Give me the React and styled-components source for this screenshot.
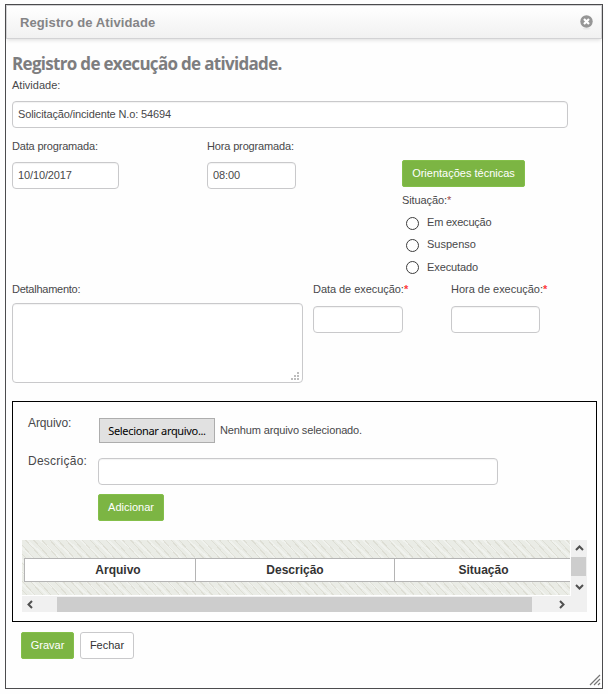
import React from 'react';
import styled, { createGlobalStyle } from 'styled-components';

const GlobalStyle = createGlobalStyle`
  * { box-sizing: border-box; }
  body { margin: 0; background: #fefefe; }
  body, input, button, textarea { font-family: "Liberation Sans", Arial, sans-serif; font-size: 11px; }
`;

const Page = styled.div`
  width: 608px;
  height: 694px;
  padding: 4px 5px;
  overflow: hidden;
`;

const Dialog = styled.section`
  position: relative;
  display: flex;
  flex-direction: column;
  width: 598px;
  height: 685px;
  background: #fefefe;
  border: 1px solid #4c4c4e;
`;

const Header = styled.header`
  display: flex;
  align-items: center;
  justify-content: space-between;
  flex: none;
  height: 34px;
  padding: 2px 8px 0 13px;
  background: linear-gradient(#ffffff, #f1f1f1);
  border: 1px solid #d2d2d4;
  box-shadow: 0 2px 4px -1px rgba(0, 0, 0, 0.14);
`;

const Title = styled.h1`
  margin: 0;
  font-size: 13px;
  line-height: 16px;
  font-weight: bold;
  color: #848486;
  letter-spacing: 0.1px;
`;

const CloseButton = styled.button`
  display: block;
  width: 13px;
  height: 15px;
  margin-top: -1px;
  padding: 0;
  border: 0;
  background: none;
`;

const Body = styled.main`
  display: flex;
  flex-direction: column;
  padding: 14px 5px 0 6px;
`;

const Heading = styled.h2`
  margin: 0;
  height: 22px;
  font: bold 17px/22px "Open Sans", "Noto Sans", sans-serif;
  letter-spacing: -0.69px;
  color: #7d7d7f;
  white-space: nowrap;
`;

const Label = styled.label`
  display: block;
  height: 14px;
  margin-top: ${(p) => p.$offset || 0}px;
  line-height: 14px;
  font-size: ${(p) => p.$size || 11}px;
  letter-spacing: ${(p) => p.$spacing ?? -0.1}px;
  color: #48484a;
  white-space: nowrap;
`;

const Required = styled.span`
  color: ${(p) => p.$color || '#ff3b3b'};
  font-weight: ${(p) => (p.$color ? 'normal' : 'bold')};
`;

const Input = styled.input`
  display: block;
  width: ${(p) => p.$width}px;
  height: 27px;
  padding: 0 5px 1px;
  color: #48484a;
  letter-spacing: -0.13px;
  background: #fff;
  border: 1px solid #c9c9cb;
  border-radius: 4px;
  box-shadow: inset 0 1px 1px rgba(0, 0, 0, 0.05);
  outline: none;
`;

const Field = styled.div`
  display: flex;
  flex-direction: column;
  gap: ${(p) => p.$gap ?? 9}px;
  width: ${(p) => (p.$width ? `${p.$width}px` : 'auto')};
  flex: none;
`;

const ScheduleRow = styled.div`
  display: flex;
  height: 143px;
  margin-top: 11px;
`;

const ExecutionRow = styled.div`
  display: flex;
  height: 101px;
`;

const StatusColumn = styled.div`
  display: flex;
  flex-direction: column;
  padding-top: 21px;
`;

const GreenButton = styled.button`
  width: ${(p) => p.$width}px;
  height: 27px;
  padding: 0 0 1px;
  color: #fff;
  background: #7cb543;
  border: 1px solid #84bf4a;
  border-radius: 2px;
  white-space: nowrap;
`;

const PlainButton = styled(GreenButton)`
  color: #333;
  background: #fff;
  border: 1px solid #c9c9cb;
  border-radius: 3px;
`;

const RadioList = styled.div`
  display: flex;
  flex-direction: column;
  padding: 5px 0 0 4px;
`;

const RadioItem = styled.label`
  display: flex;
  align-items: center;
  gap: 8px;
  height: 22px;
  line-height: 14px;
  color: #48484a;
`;

const RadioLabel = styled.span`
  margin-top: ${(p) => p.$offset}px;
  letter-spacing: ${(p) => p.$spacing}px;
`;

const Radio = styled.input.attrs({ type: 'radio' })`
  appearance: none;
  width: 13px;
  height: 13px;
  margin: 0;
  border: 1px solid #3c3c3c;
  border-radius: 50%;
  background: #fff;
`;

const TextAreaFrame = styled.div`
  position: relative;
  width: 291px;
  height: 80px;
`;

const TextArea = styled.textarea`
  display: block;
  width: 291px;
  height: 80px;
  background: #fff;
  border: 1px solid #c9c9cb;
  border-radius: 4px;
  box-shadow: inset 0 1px 1px rgba(0, 0, 0, 0.05);
  resize: none;
  outline: none;
`;

const CornerGrip = styled.svg`
  position: absolute;
  right: ${(p) => p.$right}px;
  bottom: ${(p) => p.$bottom}px;
`;

const FilePanel = styled.section`
  display: flex;
  flex-direction: column;
  flex: none;
  height: 221px;
  margin-top: 18px;
  padding-top: 16px;
  border: 1px solid #000;
`;

const PanelRow = styled.div`
  display: flex;
  flex: none;
  height: ${(p) => p.$height}px;
  padding-left: 15px;
`;

const PanelLabel = styled.div`
  width: 70px;
  flex: none;
`;

const FileButton = styled.button`
  width: 116px;
  height: 25px;
  margin: 0 5px 0 1px;
  padding: 0 0 1px;
  color: #000;
  font-family: "Noto Sans", "Open Sans", sans-serif;
  letter-spacing: -0.33px;
  white-space: nowrap;
  background: #e1e1e1;
  border: 1px solid #adadad;
`;

const FileName = styled.span`
  height: 25px;
  line-height: 24px;
  letter-spacing: -0.13px;
  color: #48484a;
  white-space: nowrap;
`;

const ScrollArea = styled.div`
  display: grid;
  grid-template-columns: 548px 16px;
  grid-template-rows: 55px 16px;
  gap: 1px;
  width: 565px;
  margin-left: 9px;
`;

const Textured = styled.div`
  padding: 18px 0 0 2px;
  background-color: #eaece6;
  background-image:
    repeating-linear-gradient(48deg, transparent 0 3px, rgba(206, 205, 192, 0.45) 3px 4px, transparent 4px 6px),
    repeating-linear-gradient(42deg, transparent 0 7px, rgba(255, 255, 255, 0.3) 7px 9px);
`;

const TableHead = styled.div`
  display: grid;
  grid-template-columns: 171px 199px 176px;
  height: 24px;
  border: solid #b4b4b4;
  border-width: 1px 0;
  background: #fff;
`;

const HeadCell = styled.div`
  padding-left: ${(p) => p.$shift || 0}px;
  border-left: 1px solid #b4b4b4;
  font: bold 12px/22px "Liberation Sans", Arial, sans-serif;
  text-align: center;
  color: #333;
`;

const VerticalBar = styled.div`
  display: flex;
  flex-direction: column;
  align-items: center;
  height: 56px;
  background: #f0f0f0;
`;

const HorizontalBar = styled.div`
  display: flex;
  grid-column: 1 / -1;
  align-items: center;
  width: 565px;
  background: #f0f0f0;
`;

const ArrowSlot = styled.div`
  display: flex;
  align-items: center;
  justify-content: center;
  flex: none;
  width: ${(p) => p.$width || 16}px;
  height: ${(p) => p.$height}px;
`;

const Thumb = styled.div`
  flex: none;
  width: ${(p) => p.$width}px;
  height: ${(p) => p.$height}px;
  margin: 0 ${(p) => p.$after || 0}px 0 ${(p) => p.$before || 0}px;
  background: #cdcdcd;
`;

const Footer = styled.footer`
  display: flex;
  gap: 6px;
  padding: 10px 0 0 9px;
`;

const arrowPaths = {
  up: 'M1 6 L4.5 2.5 L8 6',
  down: 'M1 3 L4.5 6.5 L8 3',
  left: 'M6 1 L2.5 4.5 L6 8',
  right: 'M3 1 L6.5 4.5 L3 8',
};

function Arrow({ direction }) {
  return (
    <svg width="9" height="9" viewBox="0 0 9 9">
      <path d={arrowPaths[direction]} fill="none" stroke="#505050" strokeWidth="2" />
    </svg>
  );
}

function CloseIcon() {
  return (
    <svg width="13" height="15" viewBox="0 0 13 15">
      <ellipse cx="6.5" cy="13.7" rx="4" ry="0.8" fill="#e4e4e4" />
      <circle cx="6.5" cy="6.5" r="6.2" fill="#969696" />
      <path d="M4 4 L9 9 M9 4 L4 9" stroke="#fff" strokeWidth="2.2" />
    </svg>
  );
}

const gripDots = [[6, 0], [3, 3], [6, 3], [0, 6], [3, 6], [6, 6]];

const statuses = [
  { name: 'Em execução', spacing: -0.2, offset: -2 },
  { name: 'Suspenso', spacing: 0, offset: -2 },
  { name: 'Executado', spacing: -0.1, offset: 0 },
];

export default function App() {
  return (
    <Page>
      <GlobalStyle />
      <Dialog>
        <Header>
          <Title>Registro de Atividade</Title>
          <CloseButton aria-label="Fechar"><CloseIcon /></CloseButton>
        </Header>
        <Body>
          <Heading>Registro de execução de atividade.</Heading>
          <Field>
            <Label $offset={3} $spacing={0}>Atividade:</Label>
            <Input $width={556} defaultValue="Solicitação/incidente N.o: 54694" />
          </Field>
          <ScheduleRow>
            <Field $width={195}>
              <Label $spacing={-0.18}>Data programada:</Label>
              <Input $width={107} defaultValue="10/10/2017" />
            </Field>
            <Field $width={195}>
              <Label $spacing={-0.15}>Hora programada:</Label>
              <Input $width={89} defaultValue="08:00" />
            </Field>
            <StatusColumn>
              <GreenButton $width={123}>Orientações técnicas</GreenButton>
              <Label $offset={6}>
                Situação:<Required $color="#a04848">*</Required>
              </Label>
              <RadioList>
                {statuses.map(({ name, spacing, offset }) => (
                  <RadioItem key={name}>
                    <Radio name="situacao" />
                    <RadioLabel $spacing={spacing} $offset={offset}>{name}</RadioLabel>
                  </RadioItem>
                ))}
              </RadioList>
            </StatusColumn>
          </ScheduleRow>
          <ExecutionRow>
            <Field $width={301} $gap={7}>
              <Label $spacing={-0.25}>Detalhamento:</Label>
              <TextAreaFrame>
                <TextArea />
                <CornerGrip $right={4} $bottom={3} width="8" height="8">
                  {gripDots.map(([x, y]) => (
                    <rect key={`${x}-${y}`} x={x} y={y} width="2" height="2" fill="#bdbdbd" />
                  ))}
                </CornerGrip>
              </TextAreaFrame>
            </Field>
            <Field $width={138} $gap={10}>
              <Label $spacing={-0.05}>Data de execução:<Required>*</Required></Label>
              <Input $width={90} />
            </Field>
            <Field $gap={10}>
              <Label $spacing={-0.02}>Hora de execução:<Required>*</Required></Label>
              <Input $width={89} />
            </Field>
          </ExecutionRow>
          <FilePanel>
            <PanelRow $height={40}>
              <PanelLabel><Label $size={12} $offset={-2}>Arquivo:</Label></PanelLabel>
              <FileButton>Selecionar arquivo...</FileButton>
              <FileName>Nenhum arquivo selecionado.</FileName>
            </PanelRow>
            <PanelRow $height={36}>
              <PanelLabel><Label $size={12} $offset={-4} $spacing={0.25}>Descrição:</Label></PanelLabel>
              <Input $width={400} />
            </PanelRow>
            <PanelRow $height={46}>
              <PanelLabel />
              <GreenButton $width={66}>Adicionar</GreenButton>
            </PanelRow>
            <ScrollArea>
              <Textured>
                <TableHead>
                  <HeadCell $shift={16}>Arquivo</HeadCell>
                  <HeadCell>Descrição</HeadCell>
                  <HeadCell $shift={2}>Situação</HeadCell>
                </TableHead>
              </Textured>
              <VerticalBar>
                <ArrowSlot $width={14} $height={17}><Arrow direction="up" /></ArrowSlot>
                <Thumb $width={15} $height={19} $after={1} />
                <ArrowSlot $width={14} $height={20}><Arrow direction="down" /></ArrowSlot>
              </VerticalBar>
              <HorizontalBar>
                <ArrowSlot $height={16}><Arrow direction="left" /></ArrowSlot>
                <Thumb $width={475} $height={15} $before={19} $after={21} />
                <ArrowSlot $height={16}><Arrow direction="right" /></ArrowSlot>
              </HorizontalBar>
            </ScrollArea>
          </FilePanel>
          <Footer>
            <GreenButton $width={53}>Gravar</GreenButton>
            <PlainButton $width={54}>Fechar</PlainButton>
          </Footer>
        </Body>
        <CornerGrip $right={1} $bottom={2} width="12" height="12">
          <path d="M1 11 L11 1 M5 11 L11 5 M9 11 L11 9" stroke="#777" strokeWidth="1.2" fill="none" />
        </CornerGrip>
      </Dialog>
    </Page>
  );
}
